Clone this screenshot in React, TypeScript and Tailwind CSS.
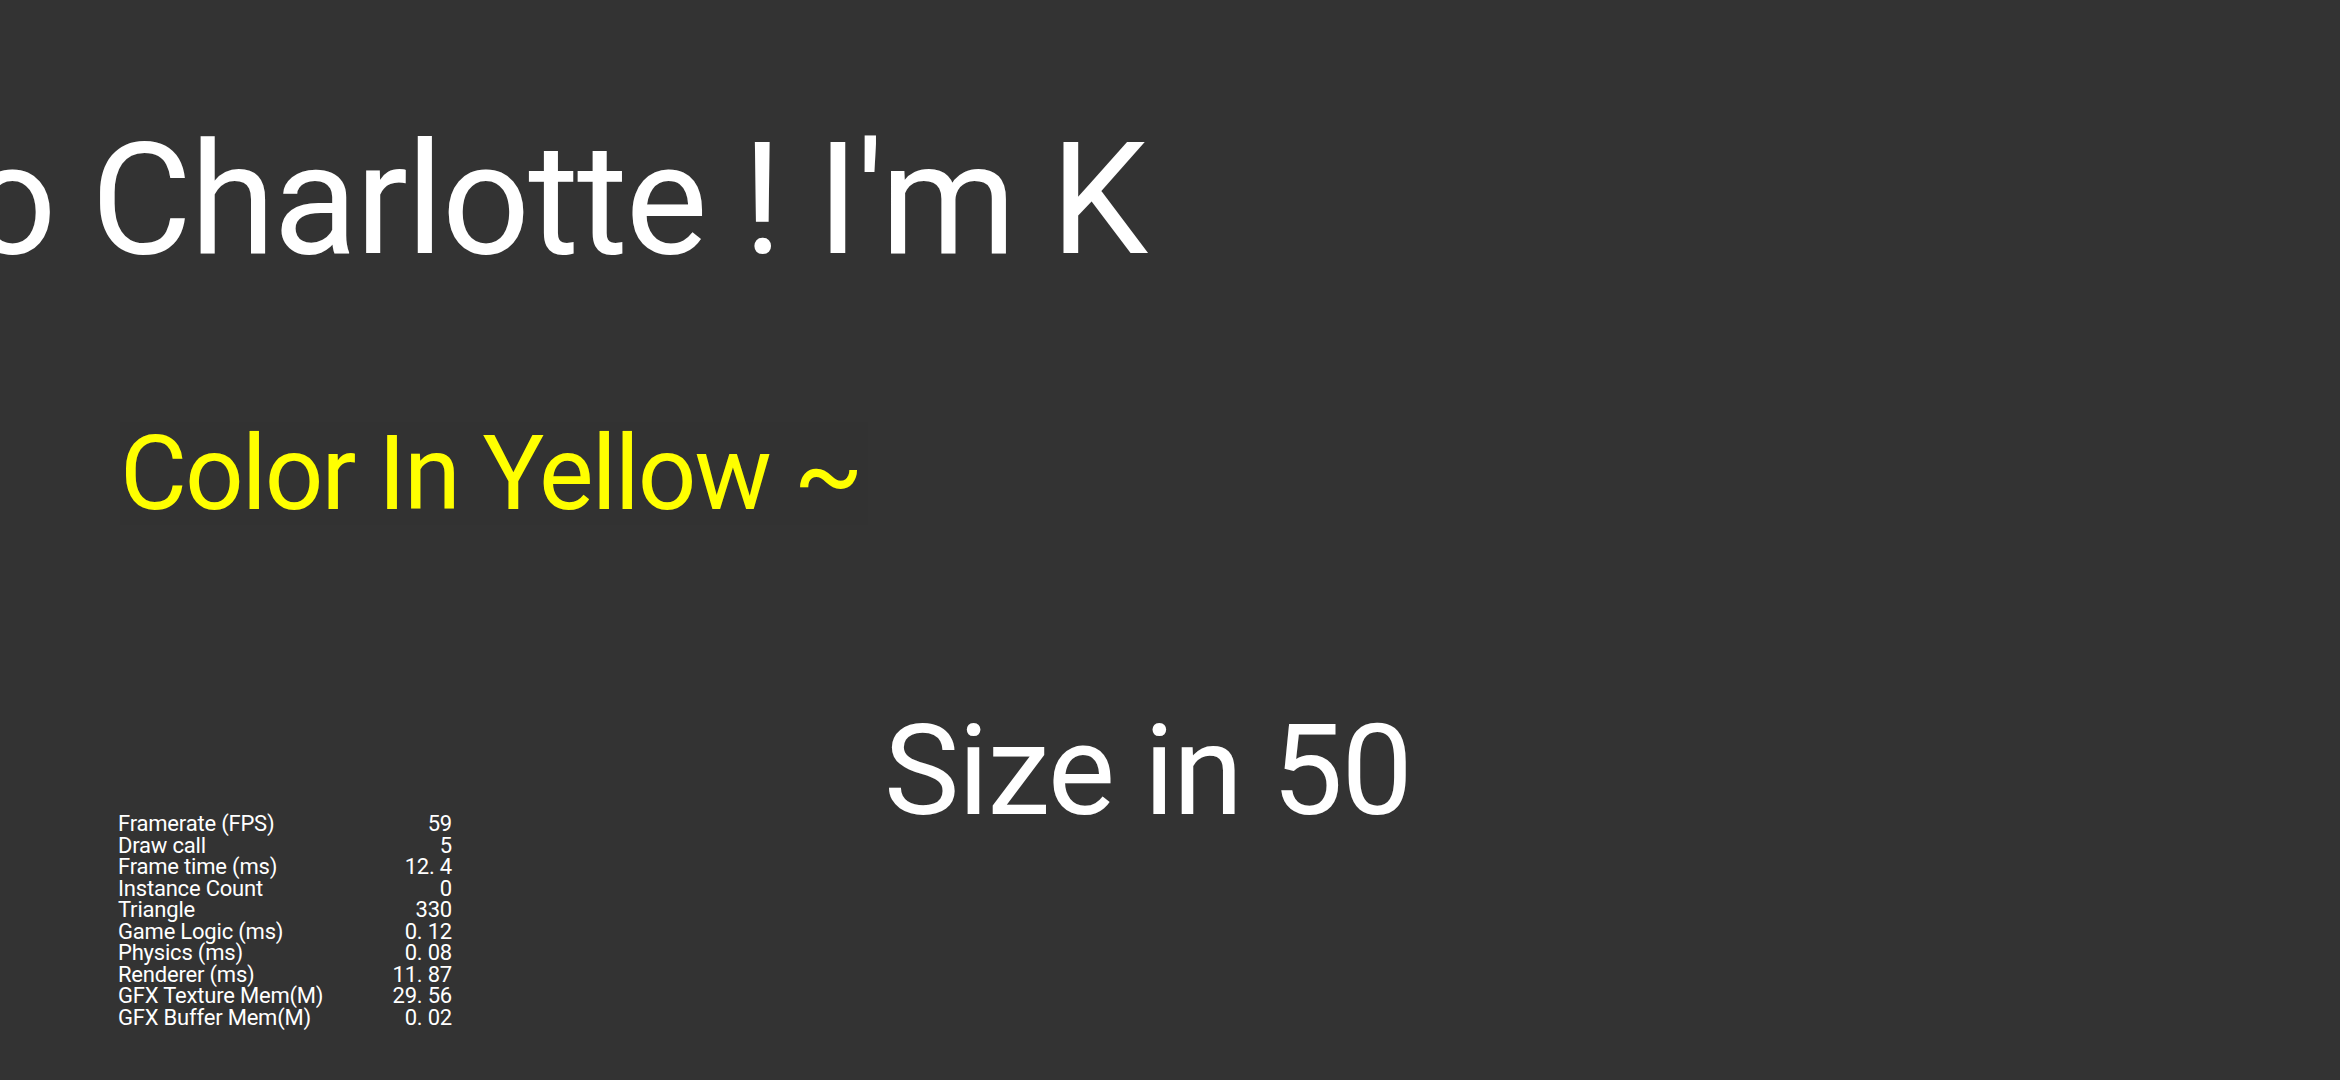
import React from "react";

const stats: [string, string][] = [
  ["Framerate (FPS)", "59"],
  ["Draw call", "5"],
  ["Frame time (ms)", "12. 4"],
  ["Instance Count", "0"],
  ["Triangle", "330"],
  ["Game Logic (ms)", "0. 12"],
  ["Physics (ms)", "0. 08"],
  ["Renderer (ms)", "11. 87"],
  ["GFX Texture Mem(M)", "29. 56"],
  ["GFX Buffer Mem(M)", "0. 02"],
];

function DebugStats() {
  return (
    <div className="absolute left-[118px] top-[813px] w-[334px] flex flex-col text-[22px] leading-[21.5px] tracking-[-0.2px] text-white">
      {stats.map(([label, value]) => (
        <div key={label} className="flex justify-between">
          <span>{label}</span>
          <span>{value}</span>
        </div>
      ))}
    </div>
  );
}

export default function App() {
  return (
    <div
      className="relative w-[2340px] h-[1080px] overflow-hidden bg-[#333333] text-white"
      style={{ fontFamily: "Roboto, 'Noto Sans', sans-serif" }}
    >
      <div className="flex flex-col pt-[123px]">
        <div className="ml-[-292px] whitespace-nowrap text-[155px] leading-none tracking-[-2px]">
          Hello Charlotte ! I'm K
        </div>

        <div className="mt-[144px] ml-[120px] self-start bg-[#323232] pr-[6px]">
          <div className="whitespace-nowrap text-[103px] leading-none tracking-[-2px] text-[#ffff00]">
            Color In Yellow ~
          </div>
        </div>

        <div className="mt-[182px] ml-[884px] whitespace-nowrap text-[127px] leading-none tracking-[-1.5px]">
          Size in 50
        </div>
      </div>

      <DebugStats />
    </div>
  );
}
